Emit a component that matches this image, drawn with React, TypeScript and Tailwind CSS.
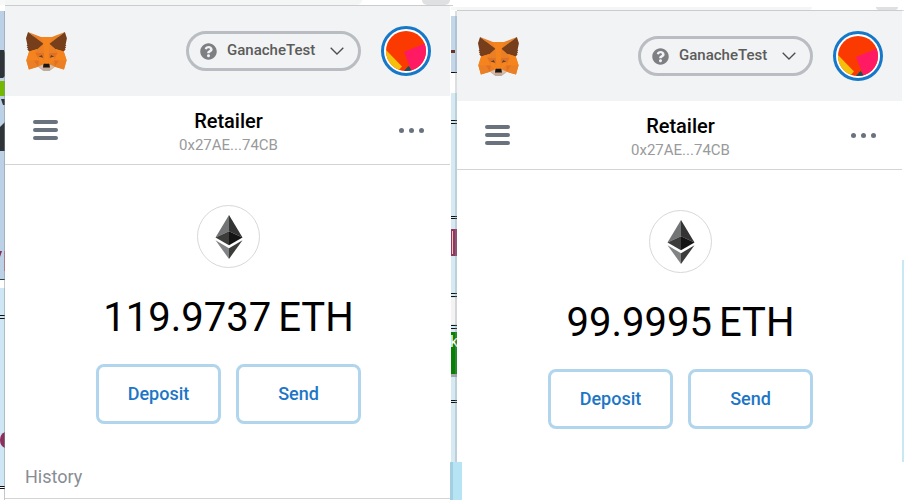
import React from "react";
import { FaQuestionCircle } from "react-icons/fa";

type Wallet = {
  id: string;
  balance: string;
  chromeClass: string;
  chrome: React.ReactNode;
  showHistory: boolean;
};

function FoxLogo() {
  return (
    <svg className="h-[39px] w-[41px]" viewBox="1 1 33.7 31.2" preserveAspectRatio="none" aria-hidden="true">
      <path
        fill="#F5841F"
        d="M4 5L13.35 5H22.27L31.5 5L32.05 16.52L34.36 23.65L32.2 30.93L24.73 28.87L20.3 31H15.3L10.89 28.87L3.4 30.93L1.27 23.65L3.57 16.52Z"
      />
      <path fill="#E88225" d="M32.96 1L19.82 10.72L22.27 4.99Z" />
      <g fill="#EA7F25">
        <path d="M2.66 1L15.68 10.81L13.35 4.99Z" />
        <path d="M28.23 23.53L24.73 28.87L32.22 30.93L34.36 23.65Z" />
        <path d="M1.27 23.65L3.4 30.93L10.89 28.87L7.39 23.53Z" />
        <path d="M10.47 14.51L8.39 17.65L15.81 17.99L15.57 9.97Z" />
        <path d="M25.15 14.51L19.98 9.87L19.81 17.99L27.23 17.65Z" />
        <path d="M10.87 28.87L15.35 26.7L11.5 23.69Z" />
        <path d="M20.27 26.7L24.73 28.87L24.12 23.69Z" />
      </g>
      <g fill="#D5BFB2">
        <path d="M24.73 28.87L20.27 26.7L20.63 29.61L20.59 30.84Z" />
        <path d="M10.87 28.87L15.03 30.84L15 29.61L15.35 26.7Z" />
      </g>
      <g fill="#DF7024">
        <path d="M10.87 28.87L11.52 23.53L7.39 23.65Z" />
        <path d="M24.1 23.53L24.73 28.87L28.23 23.65Z" />
        <path d="M27.23 17.65L19.81 17.99L20.51 21.78L21.6 19.49L24.25 20.7Z" />
        <path d="M11.39 20.7L14.01 19.49L15.11 21.78L15.81 17.99L8.39 17.65Z" />
      </g>
      <g fill="#5A4335">
        <path d="M15.11 21.78L11.39 20.7L14.01 19.49Z" />
        <path d="M20.51 21.78L21.6 19.49L24.25 20.7Z" />
      </g>
      <g fill="#E27525">
        <path d="M8.39 17.65L11.5 23.69L11.39 20.7Z" />
        <path d="M24.25 20.7L24.12 23.69L27.23 17.65Z" />
        <path d="M15.81 17.99L15.11 21.78L15.98 26.27L16.18 20.36Z" />
        <path d="M19.81 17.99L19.44 20.35L19.64 26.27L20.51 21.78Z" />
      </g>
      <g fill="#F5841F">
        <path d="M20.51 21.78L19.64 26.27L20.27 26.7L24.12 23.69L24.25 20.7Z" />
        <path d="M11.39 20.7L11.5 23.69L15.35 26.7L15.98 26.27L15.11 21.78Z" />
      </g>
      <path
        fill="#C0AC9D"
        d="M20.59 30.84L20.63 29.61L20.29 29.33H15.33L15 29.61L15.03 30.84L10.87 28.87L12.33 30.07L15.28 32.1H20.33L23.29 30.07L24.73 28.87Z"
      />
      <path fill="#161616" d="M20.27 26.7L19.64 26.27H15.98L15.35 26.7L15 29.61L15.33 29.33H20.29L20.63 29.61Z" />
      <g fill="#763E1A">
        <path d="M33.52 11.35L34.62 5.97L32.96 1L20.27 10.4L25.15 14.51L32.05 16.52L33.57 14.75L32.91 14.27L33.96 13.31L33.16 12.69L34.21 11.88Z" />
        <path d="M1 5.97L2.12 11.35L1.4 11.88L2.47 12.69L1.66 13.31L2.72 14.27L2.06 14.75L3.56 16.52L10.46 14.51L15.35 10.4L2.66 1Z" />
      </g>
      <g fill="#F5841F">
        <path d="M32.05 16.52L25.15 14.51L27.23 17.65L24.12 23.69L28.23 23.64H34.36Z" />
        <path d="M10.47 14.51L3.57 16.52L1.27 23.65H7.39L11.5 23.69L8.39 17.65Z" />
        <path d="M19.81 17.99L20.27 10.4L22.27 4.99H13.35L15.35 10.4L15.81 17.99L15.97 20.37L15.98 26.27H19.64L19.65 20.37Z" />
      </g>
    </svg>
  );
}

function Identicon() {
  return (
    <svg className="size-10 rounded-full" viewBox="0 0 40 40" aria-hidden="true">
      <rect width="40" height="40" fill="#fa3a00" />
      <path d="M22.5 35L17 41H28Z" fill="#1b4f5e" />
      <path d="M-1 18L16 35.5L11 41H-1Z" fill="#f5c00b" />
      <path d="M18 21L40 12V41H26Z" fill="#ff1a63" />
    </svg>
  );
}

function EthMark() {
  return (
    <svg className="h-11 w-7" viewBox="0 0 28 44" aria-hidden="true">
      <path d="M14 0L0.5 22.5L14 16.3Z" fill="#737475" />
      <path d="M14 0L27.5 22.5L14 16.3Z" fill="#343434" />
      <path d="M14 16.3L0.5 22.5L14 30.3Z" fill="#3c3c3b" />
      <path d="M14 16.3L27.5 22.5L14 30.3Z" fill="#141414" />
      <path d="M0.5 25.2L14 33.2V44Z" fill="#828384" />
      <path d="M27.5 25.2L14 33.2V44Z" fill="#3c3c3b" />
    </svg>
  );
}

function WalletPanel({ wallet }: { wallet: Wallet }) {
  return (
    <div className="flex min-w-0 flex-col bg-white">
      <div className={wallet.chromeClass}>{wallet.chrome}</div>
      <section
        aria-label={wallet.id}
        className="flex flex-col border-t border-[#cbcccd]"
      >
        <header className="flex h-[90px] items-center bg-[#f2f3f4] pr-[19px] pl-[21px]">
          <a href="#home" aria-label="MetaMask">
            <FoxLogo />
          </a>
          <button
            type="button"
            className="ml-auto flex h-10 w-[175px] items-center rounded-full border-3 border-[#b9bdc2] pr-[14px] pl-[11px] text-[#5b5b5b]"
          >
            <FaQuestionCircle className="size-[17px] text-[#7d7f82]" aria-hidden="true" />
            <span className="ml-[10px] pb-0.5 text-[15px] leading-5 font-medium">GanacheTest</span>
            <svg className="ml-auto h-2 w-[14px]" viewBox="0 0 14 8" fill="none" aria-hidden="true">
              <path d="M0.7 0.7L7 7L13.3 0.7" stroke="#4d4d4d" strokeWidth="1.3" />
            </svg>
          </button>
          <button
            type="button"
            aria-label="My accounts"
            className="ml-5 flex size-[50px] items-center justify-center rounded-full border-3 border-[#1678c8] bg-white"
          >
            <Identicon />
          </button>
        </header>

        <div className="flex h-[69px] items-center justify-between border-b border-[#d3d4d6] pr-[25px] pl-[27px]">
          <button type="button" aria-label="Menu" className="flex w-[27px] flex-col items-center gap-1">
            <span className="h-[4px] w-[25px] rounded-full bg-[#6a737d]" />
            <span className="h-[4px] w-[25px] rounded-full bg-[#6a737d]" />
            <span className="h-[4px] w-[25px] rounded-full bg-[#6a737d]" />
          </button>
          <div className="flex flex-col items-center pt-1.5">
            <h1 className="text-[20px] leading-6 font-medium text-black">Retailer</h1>
            <p className="text-[15px] leading-6 text-[#989a9b]">0x27AE...74CB</p>
          </div>
          <button type="button" aria-label="Account options" className="flex w-[27px] justify-center gap-[5px]">
            <span className="size-[5px] rounded-full bg-[#6a737d]" />
            <span className="size-[5px] rounded-full bg-[#6a737d]" />
            <span className="size-[5px] rounded-full bg-[#6a737d]" />
          </button>
        </div>

        <div className="flex flex-col items-center pt-10 pl-0.5">
          <div className="flex size-[63px] items-center justify-center rounded-full border border-[#d8d8d8]">
            <EthMark />
          </div>
          <p className="mt-[26px] flex gap-[7px] text-[40px] leading-[48px] text-black">
            <span>{wallet.balance}</span>
            <span>ETH</span>
          </p>
          <div className="mt-[22px] flex gap-[15px]">
            {["Deposit", "Send"].map((label) => (
              <button
                key={label}
                type="button"
                className="h-[60px] w-[125px] rounded-lg border-3 border-[#b0d5ec] pb-0.5 text-[18px] font-medium text-[#1c76c6]"
              >
                {label}
              </button>
            ))}
          </div>
        </div>

        {wallet.showHistory && (
          <div className="border-b border-[#d3d4d6] px-5 pt-[41px] pb-[9px]">
            <h2 className="text-[18px] leading-6 text-[#888d94]">History</h2>
          </div>
        )}
      </section>
    </div>
  );
}

/* Slivers of the pages that show behind the wallet windows. */
function LeftBackdrop() {
  return (
    <div className="overflow-hidden bg-white" aria-hidden="true">
      <svg width="5" height="502" viewBox="0 0 5 502">
        <rect width="5" height="5" fill="#f8f8f8" />
        <rect y="11" width="5" height="268" fill="#bcd1e5" />
        <path d="M0 50H4L5 53V76L3 78H0Z" fill="#2f3439" />
        <rect y="81" width="5" height="15" fill="#74b804" />
        <path d="M1 99H5V105H3Z" fill="#2f3439" />
        <path d="M0 127L5 122V151H0Z" fill="#2f3439" />
        <path d="M0 251H2L0 257Z" fill="#8a2c5b" />
        <rect x="4" y="251" width="1" height="20" fill="#cf6b70" />
        <rect y="279" width="5" height="1" fill="#33443d" />
        <rect y="288" width="5" height="198" fill="#cfe6f4" />
        <path d="M0 315.5H5M0 318.5H5M0 486.5H5M0 488.5H5" stroke="#111" />
        <path d="M5 432Q0 434 0 440Q0 446 5 448Z" fill="#8b2f5f" />
        <rect x="4" y="11" width="1" height="489" fill="#8494a0" opacity="0.5" />
      </svg>
    </div>
  );
}

function MiddleBackdrop() {
  return (
    <div className="relative bg-white" aria-hidden="true">
      <svg width="7" height="502" viewBox="0 0 7 502" fontFamily="Roboto, sans-serif">
        <defs>
          <clipPath id="green-sliver">
            <rect x="1" y="332" width="6" height="42" />
          </clipPath>
        </defs>
        <rect y="5" width="3" height="1" fill="#d0d0d0" />
        <rect x="1" y="7" width="6" height="3" fill="#f7f7f7" />
        <rect x="1" y="16" width="6" height="56" fill="#c3d7e9" />
        <rect x="1" y="50" width="4" height="3" fill="#6b3526" />
        <rect x="1" y="93" width="6" height="409" fill="#d6eaf3" />
        <path d="M1 72.5H7M1 120.5H7M1 123.5H7M1 216.5H7M1 218.5H7M1 293.5H7M1 296.5H7M1 325.5H7M1 328.5H7M1 400.5H7M1 402.5H7" stroke="#111" />
        <rect x="1" y="229" width="6" height="27" fill="#8e3862" />
        <path d="M2.5 231V254" stroke="#f0c4b4" />
        <rect x="1" y="298" width="6" height="26" fill="#f5f3f1" />
        <rect x="1" y="332" width="6" height="42" fill="#078007" />
        <rect x="1" y="374" width="6" height="3" fill="#a5a9ab" />
        <text x="0" y="347" fontSize="16" fill="#fff" clipPath="url(#green-sliver)">k</text>
        <rect x="5" y="11" width="2" height="451" fill="#8494a0" opacity="0.3" />
        <rect y="500" width="7" height="2" fill="#fff" />
      </svg>
      <div className="absolute top-[462px] left-0 h-[38px] w-3 bg-[#b6e4f5]" />
      <div className="absolute top-[462px] left-0 h-[38px] w-[3px] bg-[#a5cfe0]" />
    </div>
  );
}

function RightBackdrop() {
  return (
    <div className="bg-white" aria-hidden="true">
      <svg width="2" height="502" viewBox="0 0 2 502">
        <rect y="10" width="2" height="1" fill="#dcdcdc" />
        <rect y="260" width="2" height="202" fill="#c8e8f4" />
      </svg>
    </div>
  );
}

const first: Wallet = {
  id: "Wallet before",
  balance: "119.9737",
  chromeClass: "flex h-[5px] overflow-hidden bg-white",
  chrome: (
    <>
      <div className="h-full grow rounded-br-full bg-[#f4f5f5]" />
      <div className="flex w-[88px] justify-end">
        <div className="h-[5px] w-7 rounded-b-full bg-[#dfe0e1]" />
      </div>
    </>
  ),
  showHistory: true,
};

const second: Wallet = {
  id: "Wallet after",
  balance: "99.9995",
  chromeClass: "flex h-[10px] items-end overflow-hidden bg-white",
  chrome: (
    <>
      <div className="h-[3px] grow rounded-br-full bg-[#f4f5f5]" />
      <div className="flex w-[90px] justify-end pr-1">
        <div className="h-[3px] w-[22px] rounded-b-full bg-[#dfe0e1]" />
      </div>
    </>
  ),
  showHistory: false,
};

export default function App() {
  return (
    <main className="grid min-h-screen grid-cols-[5px_1fr_7px_1fr_2px] bg-white font-[Roboto,'Liberation_Sans',sans-serif]">
      <LeftBackdrop />
      <WalletPanel wallet={first} />
      <MiddleBackdrop />
      <WalletPanel wallet={second} />
      <RightBackdrop />
    </main>
  );
}
